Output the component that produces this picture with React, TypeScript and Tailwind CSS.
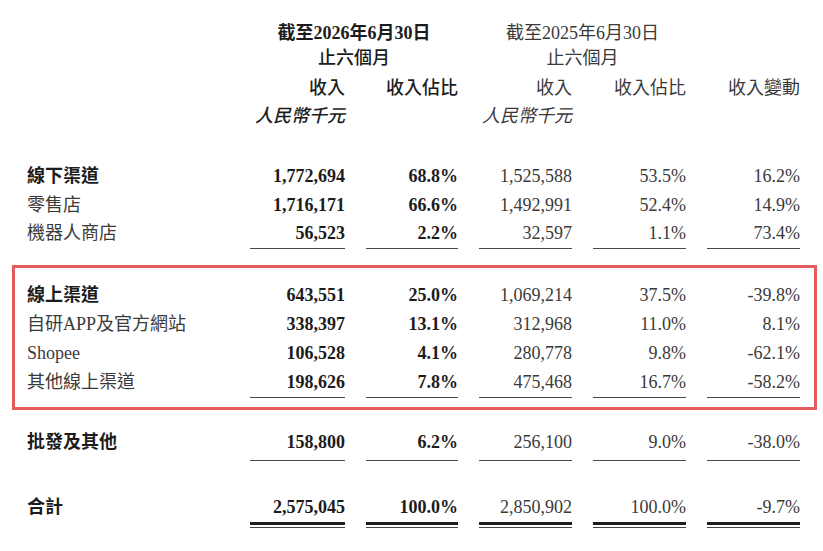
const font = { fontFamily: '"Liberation Serif", "Noto Sans CJK TC", serif' }

type Row = { label: string; bold?: boolean; cells: string[] }

const offline: Row[] = [
  { label: "線下渠道", bold: true, cells: ["1,772,694", "68.8%", "1,525,588", "53.5%", "16.2%"] },
  { label: "零售店", cells: ["1,716,171", "66.6%", "1,492,991", "52.4%", "14.9%"] },
  { label: "機器人商店", cells: ["56,523", "2.2%", "32,597", "1.1%", "73.4%"] },
]

const online: Row[] = [
  { label: "線上渠道", bold: true, cells: ["643,551", "25.0%", "1,069,214", "37.5%", "-39.8%"] },
  { label: "自研APP及官方網站", cells: ["338,397", "13.1%", "312,968", "11.0%", "8.1%"] },
  { label: "Shopee", cells: ["106,528", "4.1%", "280,778", "9.8%", "-62.1%"] },
  { label: "其他線上渠道", cells: ["198,626", "7.8%", "475,468", "16.7%", "-58.2%"] },
]

const grid = "grid grid-cols-[202px_95px_92px_93px_93px_93px] gap-x-[21px]"

function DataRow({ row, h }: { row: Row; h: string }) {
  return (
    <div className={`${grid} ${h} items-center text-[18px] leading-none`}>
      <div className={row.bold ? "font-bold text-[#1c1c1c]" : "text-[#3a3a3a]"}>{row.label}</div>
      {row.cells.map((c, i) => (
        <div
          key={i}
          className={`text-right ${i < 2 ? "font-bold text-[#1c1c1c]" : "text-[#3a3a3a]"}`}
        >
          {c}
        </div>
      ))}
    </div>
  )
}

function Rule({ double }: { double?: boolean }) {
  return (
    <div className={grid}>
      <div />
      {[0, 1, 2, 3, 4].map((i) =>
        double ? (
          <div key={i} className="flex flex-col">
            <div className="h-[3px] bg-[#1e1e1e]" />
            <div className="h-[2px]" />
            <div className="h-px bg-[#444]" />
          </div>
        ) : (
          <div key={i} className="h-px bg-[#4a4a4a]" />
        )
      )}
    </div>
  )
}

export default function App() {
  return (
    <div className="w-[823px] h-[551px] bg-white overflow-hidden" style={font}>
      {/* header */}
      <div className="pl-[27px] pt-[20px] text-[18px] leading-none">
        <div className={`${grid} h-[25px] items-center`}>
          <div />
          <div className="col-span-2 text-center font-bold text-[#1c1c1c]">截至2026年6月30日</div>
          <div className="col-span-2 text-center text-[#3a3a3a]">截至2025年6月30日</div>
          <div />
        </div>
        <div className={`${grid} h-[25px] items-center`}>
          <div />
          <div className="col-span-2 text-center font-medium text-[#1c1c1c]">止六個月</div>
          <div className="col-span-2 text-center text-[#3a3a3a]">止六個月</div>
          <div />
        </div>
        <div className={`${grid} h-[28px] items-center mt-[4px]`}>
          <div />
          <div className="text-right font-medium text-[#1c1c1c]">收入</div>
          <div className="text-right font-medium text-[#1c1c1c]">收入佔比</div>
          <div className="text-right text-[#3a3a3a]">收入</div>
          <div className="text-right text-[#3a3a3a]">收入佔比</div>
          <div className="text-right text-[#3a3a3a]">收入變動</div>
        </div>
        <div className={`${grid} h-[28px] items-center`}>
          <div />
          <div className="text-right italic font-medium text-[#1c1c1c]">人民幣千元</div>
          <div />
          <div className="text-right italic text-[#3a3a3a]">人民幣千元</div>
          <div />
          <div />
        </div>
      </div>

      {/* offline */}
      <div className="pl-[27px] mt-[32px]">
        {offline.map((r) => (
          <DataRow key={r.label} row={r} h="h-[28.5px]" />
        ))}
        <Rule />
      </div>

      {/* online, highlighted */}
      <div className="ml-[12px] mt-[16px] w-[805px] border-[3px] border-[#e35b5b] pl-[12px] pt-[13px] pb-[9px]">
        {online.map((r) => (
          <DataRow key={r.label} row={r} h="h-[29px]" />
        ))}
        <Rule />
      </div>

      {/* wholesale */}
      <div className="pl-[27px] mt-[14px]">
        <DataRow row={{ label: "批發及其他", bold: true, cells: ["158,800", "6.2%", "256,100", "9.0%", "-38.0%"] }} h="h-[36px]" />
        <Rule />
      </div>

      {/* total */}
      <div className="pl-[27px] mt-[31px]">
        <DataRow row={{ label: "合計", bold: true, cells: ["2,575,045", "100.0%", "2,850,902", "100.0%", "-9.7%"] }} h="h-[30px]" />
        <Rule double />
      </div>
    </div>
  )
}
